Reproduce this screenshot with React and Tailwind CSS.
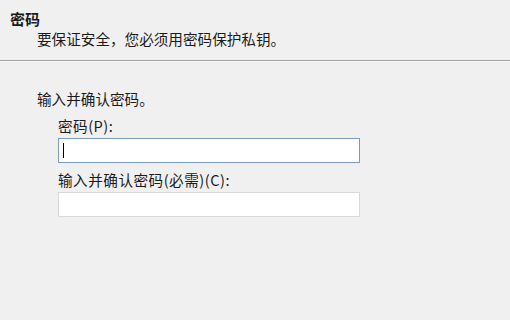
export default function App() {
  const font = { fontFamily: '"Noto Sans CJK SC", "Noto Sans", sans-serif' };
  return (
    <div className="h-[320px] w-[510px] overflow-hidden bg-[#f0f0f0] text-[#1a1a1a]" style={font}>
      <div className="h-[60px] pt-[9px]">
        <div className="ml-[10px] text-[15px] font-bold leading-[20px]">密码</div>
        <div className="ml-[37px] mt-[1px] text-[14.6px] leading-[18px]">要保证安全，您必须用密码保护私钥。</div>
      </div>
      <div className="h-px bg-[#a0a0a0]" />
      <div className="h-px bg-[#fcfcfc]" />
      <div className="pl-[37px] pt-[28px]">
        <div className="text-[14.6px] leading-[18px]">输入并确认密码。</div>
        <div className="ml-[21px] mt-[9px] w-[302px]">
          <div className="text-[14.6px] leading-[18px] tracking-[0.5px]">密码(P):</div>
          <div className="mt-[3px] flex h-[25px] items-center border border-[#7a9cbf] bg-white pl-[4px]">
            <div className="h-[15px] w-px bg-black" />
          </div>
          <div className="mt-[8px] text-[14.6px] leading-[18px] tracking-[0.5px]">输入并确认密码(必需)(C):</div>
          <div className="mt-[3px] h-[25px] border border-[#d9d9d9] bg-white" />
        </div>
      </div>
    </div>
  );
}
